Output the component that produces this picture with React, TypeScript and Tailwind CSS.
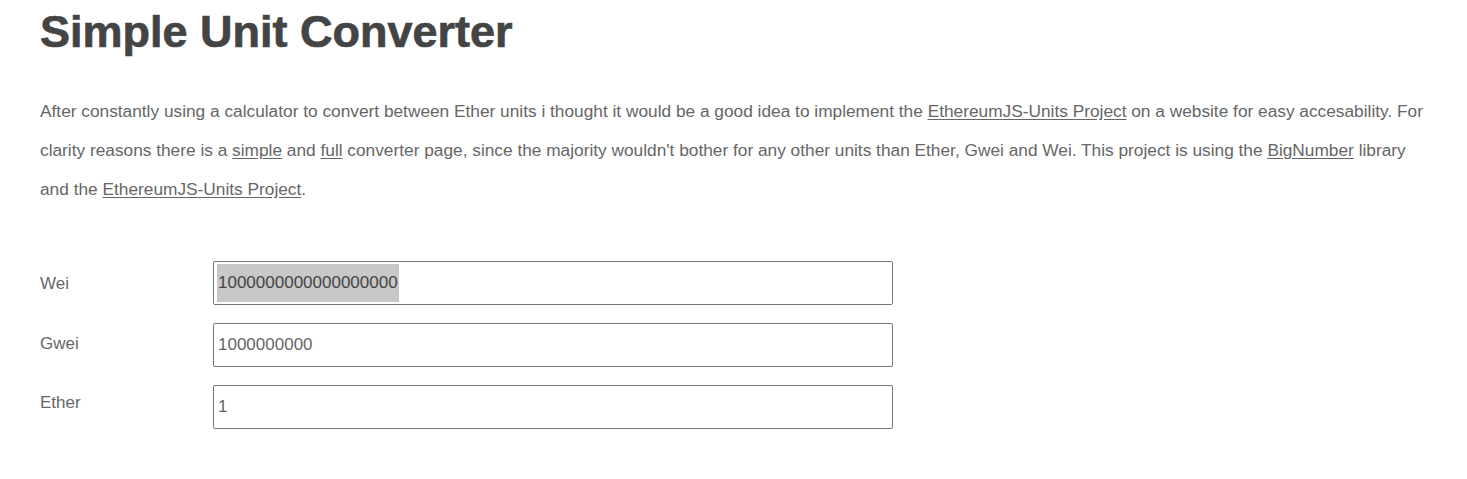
const Field = ({ label, value, selected, pad }: { label: string; value: string; selected?: boolean; pad: string }) => (
  <div className="flex items-start">
    <label className={`w-[173px] text-[17px] text-[#666] ${pad}`}>{label}</label>
    <div className="flex h-[44px] w-[680px] items-center rounded-[2px] border border-[#777] bg-white px-[3px]">
      {selected ? (
        <span className="bg-[#c8c8c8] px-[1px] text-[17px] leading-[38px] text-[#444]">{value}</span>
      ) : (
        <span className="px-[1px] text-[17px] leading-[38px] text-[#666]">{value}</span>
      )}
    </div>
  </div>
)

const A = ({ children }: { children: React.ReactNode }) => (
  <a href="#" className="underline underline-offset-2">
    {children}
  </a>
)

export default function App() {
  return (
    <div className="min-h-screen bg-white pl-10 pr-[36px] font-['Liberation_Sans',Arial,sans-serif]">
      <h1 className="mt-[6px] text-[45px] font-bold leading-[52px] text-[#444] [-webkit-text-stroke:0.7px_#444]">
        Simple Unit Converter
      </h1>
      <p className="mt-[34px] text-[17.3px] leading-[39px] text-[#666]">
        After constantly using a calculator to convert between Ether units i thought it would be a good idea to
        implement the <A>EthereumJS-Units Project</A> on a website for easy accesability. For clarity reasons there
        is a <A>simple</A> and <A>full</A> converter page, since the majority wouldn't bother for any other units
        than Ether, Gwei and Wei. This project is using the <A>BigNumber</A> library and the{" "}
        <A>EthereumJS-Units Project</A>.
      </p>
      <div className="mt-[52px] flex flex-col gap-[18px]">
        <Field label="Wei" value="1000000000000000000" selected pad="pt-[10px]" />
        <Field label="Gwei" value="1000000000" pad="pt-[8px]" />
        <Field label="Ether" value="1" pad="pt-[5px]" />
      </div>
    </div>
  )
}
